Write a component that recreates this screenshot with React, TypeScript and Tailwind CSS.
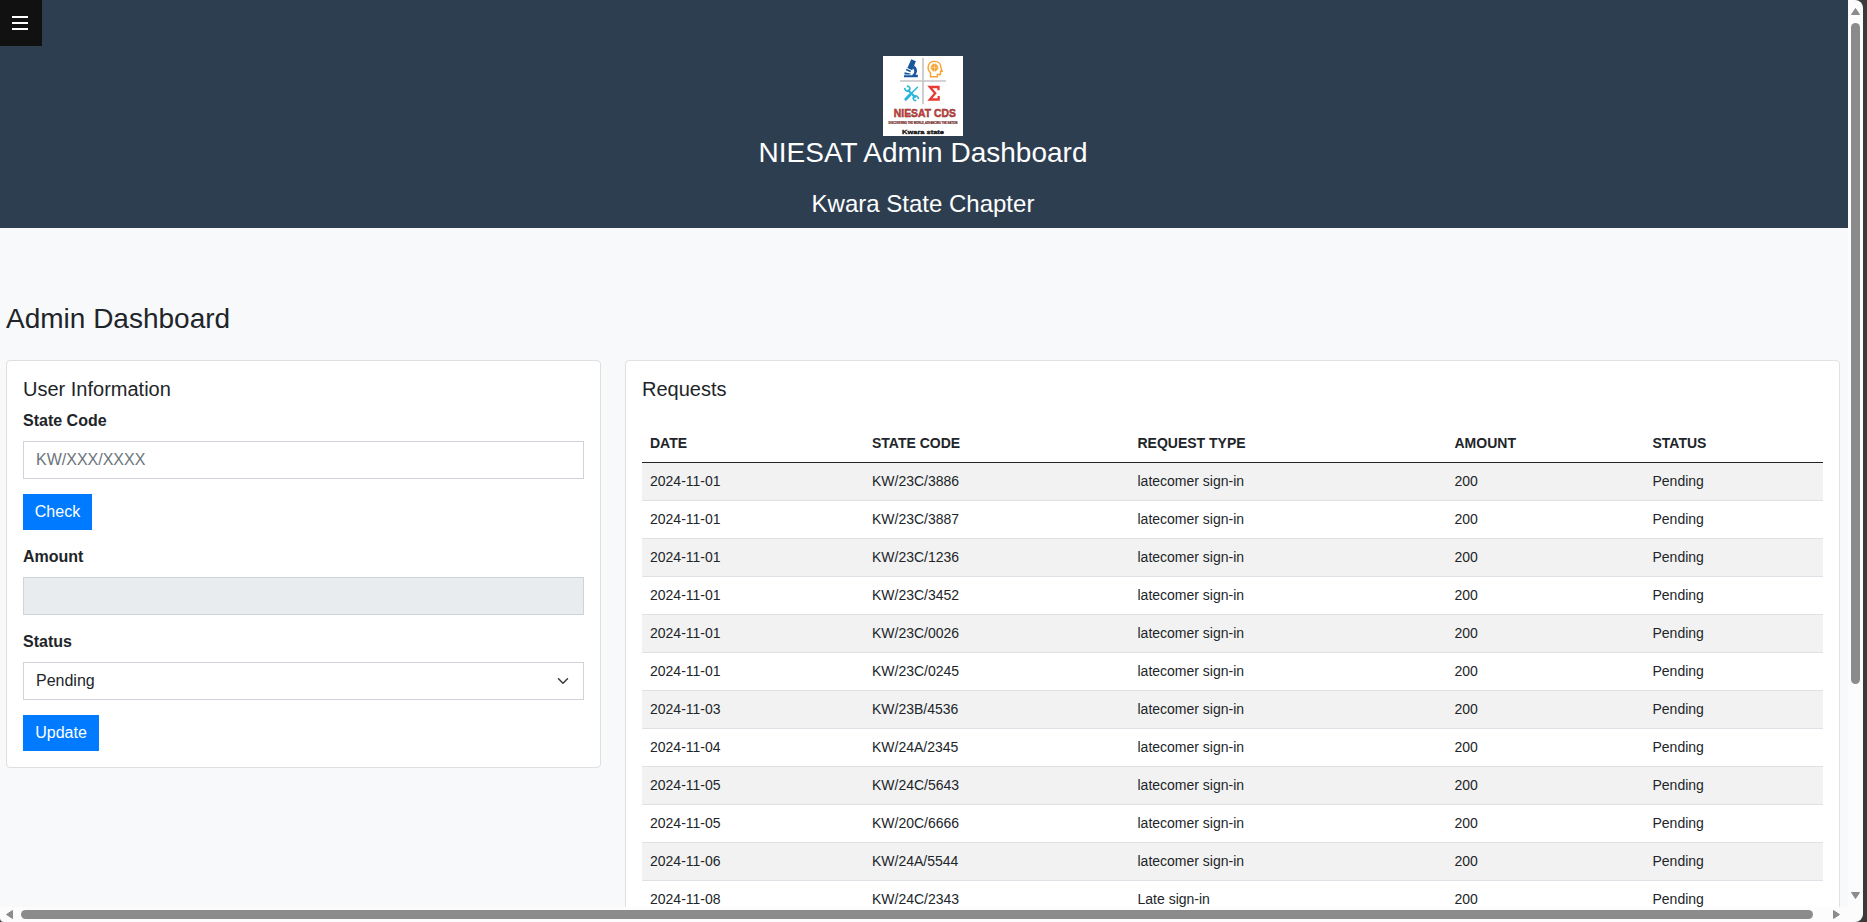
const rows: [string, string, string][] = [
  ['2024-11-01', 'KW/23C/3886', 'latecomer sign-in'],
  ['2024-11-01', 'KW/23C/3887', 'latecomer sign-in'],
  ['2024-11-01', 'KW/23C/1236', 'latecomer sign-in'],
  ['2024-11-01', 'KW/23C/3452', 'latecomer sign-in'],
  ['2024-11-01', 'KW/23C/0026', 'latecomer sign-in'],
  ['2024-11-01', 'KW/23C/0245', 'latecomer sign-in'],
  ['2024-11-03', 'KW/23B/4536', 'latecomer sign-in'],
  ['2024-11-04', 'KW/24A/2345', 'latecomer sign-in'],
  ['2024-11-05', 'KW/24C/5643', 'latecomer sign-in'],
  ['2024-11-05', 'KW/20C/6666', 'latecomer sign-in'],
  ['2024-11-06', 'KW/24A/5544', 'latecomer sign-in'],
  ['2024-11-08', 'KW/24C/2343', 'Late sign-in'],
];

function Logo() {
  return (
    <svg viewBox="0 0 80 80" className="block size-20 bg-white" fontFamily="Liberation Sans, sans-serif">
      <path d="M40 2V48M17 25H63" stroke="#c4c4c4" strokeWidth="1.6" />
      <g fill="#17579c">
        <path d="M28.300 3.200l4.600 2-3.700 9-4.800-2.100z" />
        <path d="M23.500 12.800l4.500 2-.6 1.400-4.500-2z" />
        <path d="M30.800 9.500c3.500 2 4.200 6 1.700 9.200h2.300v2.500H21v-2h8c2.700-1.700 3-4.500.8-6.900z" />
        <path d="M21.500 16.200l6 1.200v1h-6z" />
      </g>
      <g fill="none" stroke="#f7a12f" strokeWidth="1.400">
        <path d="M47.500 20.700v-4C43.500 13 44.500 5.400 51.500 5.400c4.700 0 6.500 3.500 6.500 6.600l1.200 3.300H57.500v3.200h-3.200v2.200z" />
        <rect x="49" y="9" width="5" height="5" rx="1" />
        <path d="M50.500 7.500v8M52.500 7.500v8M47.500 10.600h8M47.500 12.600h8" strokeWidth=".8" />
      </g>
      <g stroke="#29b6dc" fill="none" strokeLinecap="round">
        <path d="M25.500 34.500L32 41" strokeWidth="2.200" />
        <path d="M21.800 32.500c.3 2.500 3 3.200 4.400 1.800s.6-4-1.700-4.200M35.300 42.300c-.3-2.500-3-3.200-4.400-1.800s-.6 4 1.700 4.200" strokeWidth="1.700" />
        <path d="M34.500 31.200L28 37.800" strokeWidth="1.500" />
        <path d="M27 38.800l-4.200 4.400" strokeWidth="3" />
      </g>
      <path d="M55.500 34.200v-3.200H46.800l5.400 6.200-5.400 6.300h8.900v-3.400" fill="none" stroke="#e83b35" strokeWidth="2.300" />
      <text x="41.800" y="61.400" textAnchor="middle" textLength="62" lengthAdjust="spacingAndGlyphs" fontSize="11.500" fontWeight="bold" fill="#dc413b" stroke="#7b3434" strokeWidth=".5">NIESAT CDS</text>
      <text x="40" y="67.800" textAnchor="middle" textLength="69" lengthAdjust="spacingAndGlyphs" fontSize="2.600" fontWeight="bold" fill="#6b2020" stroke="#6b2020" strokeWidth=".15">DISCOVERING THE WORLD, ADVANCING THE NATION</text>
      <text x="40" y="77.500" textAnchor="middle" textLength="42" lengthAdjust="spacingAndGlyphs" fontSize="6" fontWeight="bold" fill="#111" stroke="#111" strokeWidth=".3">Kwara state</text>
    </svg>
  );
}

function Table() {
  return (
    <table className="w-full table-fixed border-separate border-spacing-0 text-left text-sm">
      <colgroup>
        <col className="w-[222px]" />
        <col className="w-[265.500px]" />
        <col className="w-[317px]" />
        <col className="w-[198px]" />
        <col />
      </colgroup>
      <thead>
        <tr>
          {['DATE', 'STATE CODE', 'REQUEST TYPE', 'AMOUNT', 'STATUS'].map((h) => (
            <th key={h} className="h-[39px] border-b border-[#212529] px-2 pt-[9px] pb-0 align-top font-bold">{h}</th>
          ))}
        </tr>
      </thead>
      <tbody>
        {rows.map(([date, code, type]) => (
          <tr key={code} className="odd:bg-[#f2f2f2]">
            {[date, code, type, '200', 'Pending'].map((v, i) => (
              <td key={i} className="h-[38px] border-b border-[#dee2e6] px-2 pt-2 pb-0 align-top">{v}</td>
            ))}
          </tr>
        ))}
      </tbody>
    </table>
  );
}

function VerticalScrollbar() {
  return (
    <div className="flex w-[15px] shrink-0 flex-col items-center rounded-tr-lg bg-[#fcfcfc]">
      <svg viewBox="0 0 15 23" className="h-[23px] w-[15px] shrink-0">
        <path d="M7.500 8.500L11.500 14.500H3.500z" fill="#8b8b8b" stroke="#8b8b8b" strokeLinejoin="round" />
      </svg>
      <div className="h-[661px] w-[9px] rounded-full bg-[#8b8b8b]" />
      <svg viewBox="0 0 15 20" className="mt-auto h-5 w-[15px] shrink-0">
        <path d="M7.500 11.500L11.500 5.500H3.500z" fill="#8b8b8b" stroke="#8b8b8b" strokeLinejoin="round" />
      </svg>
    </div>
  );
}

function HorizontalScrollbar() {
  return (
    <div className="flex h-[15px] w-[1863px] shrink-0 items-center rounded-br-lg rounded-bl bg-[#fcfcfc]">
      <svg viewBox="0 0 21 15" className="h-[15px] w-[21px] shrink-0">
        <path d="M6.500 7.500L12.500 3.500V11.500z" fill="#8b8b8b" stroke="#8b8b8b" strokeLinejoin="round" />
      </svg>
      <div className="h-[9px] w-[1792px] rounded-full bg-[#8b8b8b]" />
      <svg viewBox="0 0 20 15" className="ml-[19px] h-[15px] w-5 shrink-0">
        <path d="M7.500 7.500L1.500 3.500V11.500z" fill="#8b8b8b" stroke="#8b8b8b" strokeLinejoin="round" />
      </svg>
    </div>
  );
}

export default function App() {
  return (
    <div className="flex h-[922px] w-[1867px] flex-col overflow-hidden bg-[#3a3a3a] font-['Liberation_Sans',Arial,sans-serif] text-base text-[#212529]">
      <div className="flex h-[907px] w-[1863px]">
        <div className="relative w-[1848px] overflow-hidden bg-[#f8f9fb]">
          <button aria-label="Menu" className="absolute top-0 left-0 flex h-[46px] w-[42px] items-center bg-[#111] pl-3">
            <svg viewBox="0 0 16 14" className="h-3.5 w-4">
              <path d="M0 1h16M0 7h16M0 13h16" stroke="#fff" strokeWidth="2" />
            </svg>
          </button>
          <header className="flex h-[228px] flex-col items-center bg-[#2d3e50] pt-14 pr-0.5 text-white">
            <Logo />
            <h1 className="text-[28px] leading-[34px]">NIESAT Admin Dashboard</h1>
            <h2 className="mt-[19px] text-2xl leading-[29px]">Kwara State Chapter</h2>
          </header>
          <main className="px-1.5 pt-[74px]">
            <h2 className="text-[28px] leading-[34px]">Admin Dashboard</h2>
            <div className="mt-6 flex items-start gap-6">
              <section className="h-[408px] w-[595px] shrink-0 rounded border border-[#dfdfdf] bg-white p-4">
                <h3 className="text-xl leading-6">User Information</h3>
                <label className="mt-2 block font-bold">State Code</label>
                <input placeholder="KW/XXX/XXXX" className="mt-2 block h-[38px] w-full border border-[#ced4da] bg-white px-3 placeholder:text-[#6c757d]" />
                <button className="mt-[15px] block h-9 w-[69px] bg-[#007bff] text-white">Check</button>
                <label className="mt-[15px] block font-bold">Amount</label>
                <input disabled className="mt-2 block h-[38px] w-full border border-[#ced4da] bg-[#e9ecef] px-3" />
                <label className="mt-[15px] block font-bold">Status</label>
                <div className="mt-2 flex h-[38px] w-full items-center justify-between border border-[#ced4da] bg-white pr-3 pl-3">
                  <span>Pending</span>
                  <svg viewBox="0 0 16 16" className="h-3 w-4">
                    <path d="M2 5l6 6 6-6" fill="none" stroke="#343a40" strokeWidth="2" strokeLinecap="round" strokeLinejoin="round" />
                  </svg>
                </div>
                <button className="mt-[15px] block h-9 w-[76px] bg-[#007bff] text-white">Update</button>
              </section>
              <section className="h-[640px] w-[1215px] shrink-0 rounded border border-[#dfe1e5] bg-white p-4">
                <h3 className="text-xl leading-6">Requests</h3>
                <div className="mt-[23px]">
                  <Table />
                </div>
              </section>
            </div>
          </main>
        </div>
        <VerticalScrollbar />
      </div>
      <HorizontalScrollbar />
    </div>
  );
}
